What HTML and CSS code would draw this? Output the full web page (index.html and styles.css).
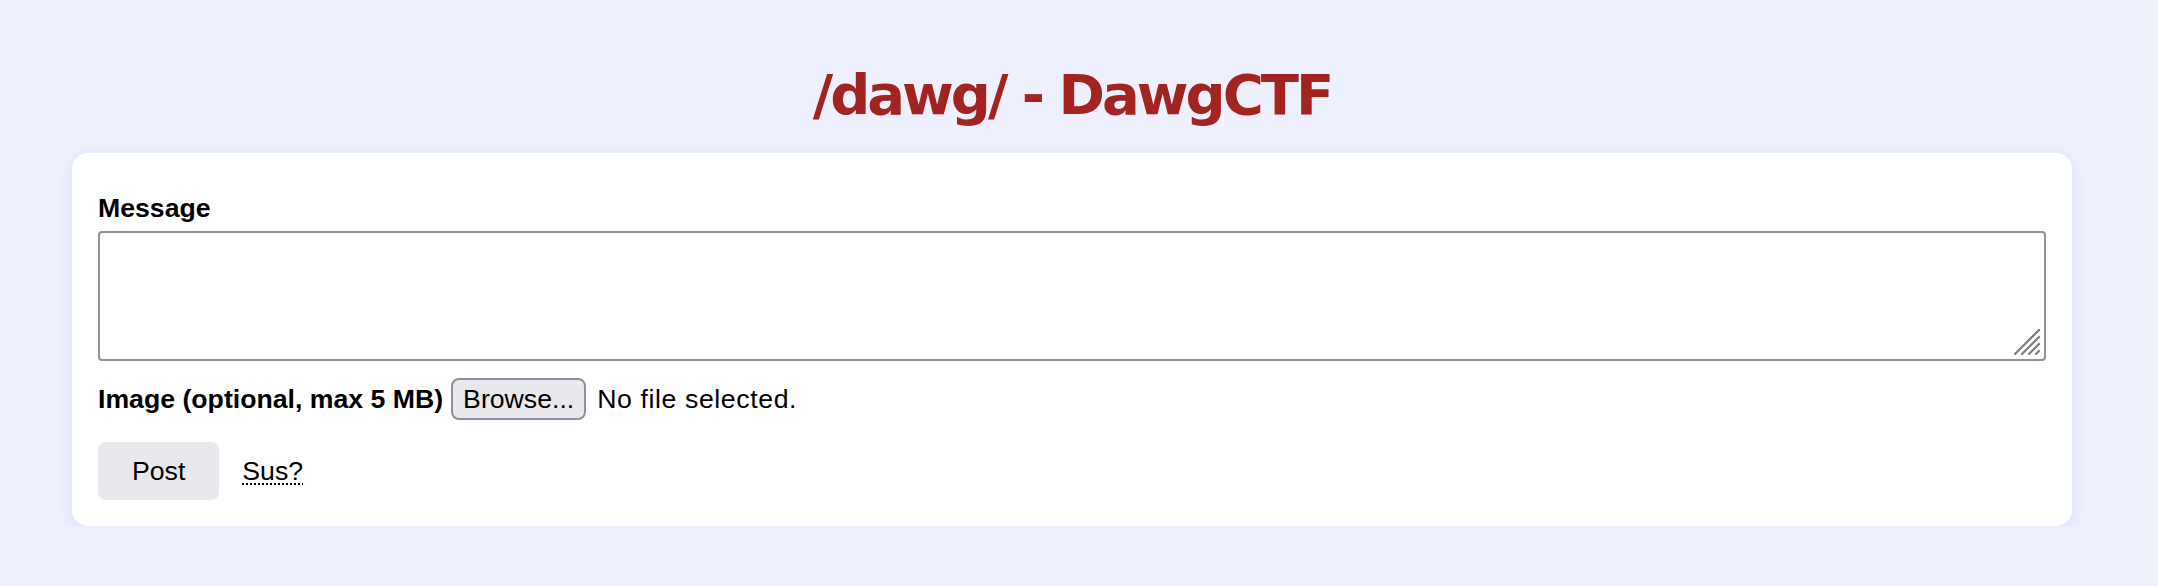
FILE: index.html
```html
<!DOCTYPE html>
<html lang="en">
<head>
<meta charset="utf-8">
<title>/dawg/ - DawgCTF</title>
<link rel="stylesheet" href="styles.css">
</head>
<body>
<div class="page">
  <h1 class="title">/dawg/ - DawgCTF</h1>
  <form class="card">
    <label class="field-label" for="msg">Message</label>
    <div class="ta-wrap">
      <textarea id="msg" class="message"></textarea>
      <svg class="grip" width="26" height="26" viewBox="0 0 26 26" aria-hidden="true">
        <line x1="1" y1="25" x2="25" y2="1"/>
        <line x1="8" y1="25" x2="25" y2="8"/>
        <line x1="15" y1="25" x2="25" y2="15"/>
        <line x1="22" y1="25" x2="25" y2="22"/>
      </svg>
    </div>
    <div class="file-row">
      <span class="field-label inline">Image (optional, max 5 MB)</span>
      <button type="button" class="browse">Browse...</button>
      <span class="nofile">No file selected.</span>
    </div>
    <div class="actions">
      <button type="button" class="post">Post</button>
      <abbr class="sus" title="Report">Sus?</abbr>
    </div>
  </form>
</div>
</body>
</html>
```

FILE: styles.css
```css
html, body {
  margin: 0;
  padding: 0;
}
body {
  background: #eef0fe;
  font-family: "Liberation Sans", Arial, sans-serif;
  font-size: 26.67px;
  color: #000;
}
.page {
  width: 2000px;
  padding: 61px 0 0 72px;
}
.title {
  margin: 0 0 25px;
  font-family: "DejaVu Sans", Tahoma, sans-serif;
  font-weight: 700;
  font-size: 56px;
  line-height: 67px;
  letter-spacing: -3px;
  color: #a2231f;
  text-align: center;
}
.card {
  display: block;
  background: #fff;
  border-radius: 16px;
  padding: 40px 26px 26px;
  box-shadow: 0 4px 18px rgba(40, 50, 120, 0.08);
}
.field-label {
  display: block;
  font-weight: 700;
  line-height: 31px;
  margin-bottom: 7px;
}
.field-label.inline {
  display: inline;
  margin: 0;
}
.ta-wrap {
  position: relative;
}
.message {
  display: block;
  box-sizing: border-box;
  width: 100%;
  height: 130px;
  margin: 0;
  border: 2px solid #8f8f9d;
  border-radius: 4px;
  background: #fff;
  resize: none;
  font: inherit;
  padding: 4px;
}
.grip {
  position: absolute;
  right: 6px;
  bottom: 6px;
  stroke: #7a7a7a;
  stroke-width: 2;
  stroke-linecap: square;
}
.file-row {
  display: flex;
  align-items: center;
  margin-top: 17px;
  line-height: 31px;
}
.browse {
  margin: 0 11px 0 8px;
  padding: 4px 10px;
  border: 2px solid #8f8f9d;
  border-radius: 8px;
  background: #e9e9ed;
  font: inherit;
  line-height: 30px;
  color: #000;
}
.nofile {
  letter-spacing: 0.6px;
}
.actions {
  display: flex;
  align-items: center;
  gap: 23px;
  margin-top: 22px;
}
.post {
  margin: 0;
  padding: 14px 34px;
  border: none;
  border-radius: 8px;
  background: #e9e9ed;
  font: inherit;
  line-height: 30px;
  color: #000;
}
.sus {
  text-decoration: underline dotted;
  text-decoration-thickness: 2px;
  text-underline-offset: 4px;
  cursor: help;
}
```
